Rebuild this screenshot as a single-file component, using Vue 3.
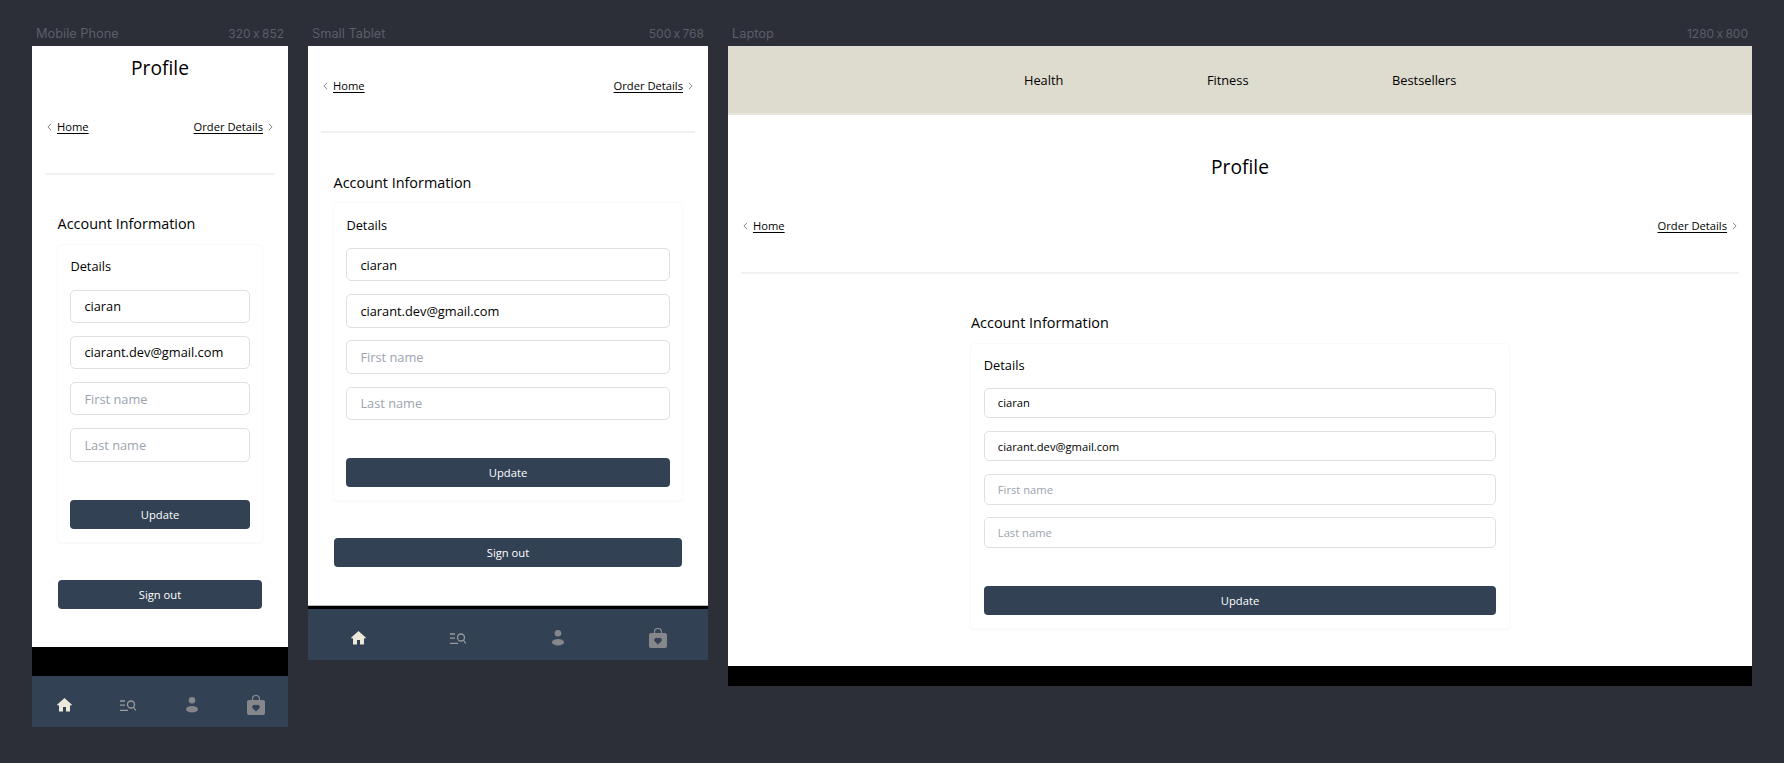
<template>
  <div class="canvas">
    <section class="device mobile">
      <div class="device-label"><span>Mobile Phone</span><span class="size">320 x 852</span></div>
      <div class="screen">
        <div class="page">
          <h1 class="title">Profile</h1>
          <div class="crumbs">
            <a class="crumb"><svg class="chev" viewBox="0 0 6 10"><path d="M5 1 1 5l4 4" /></svg><u>Home</u></a>
            <a class="crumb"><u>Order Details</u><svg class="chev" viewBox="0 0 6 10"><path d="m1 1 4 4-4 4" /></svg></a>
          </div>
          <hr class="rule" />
          <div class="content">
            <h2 class="heading">Account Information</h2>
            <form class="card" @submit.prevent>
              <h3 class="card-title">Details</h3>
              <input v-for="f in fields" :key="f.ph" class="field" :value="f.val" :placeholder="f.ph" />
              <button class="btn update">Update</button>
            </form>
            <button class="btn signout">Sign out</button>
          </div>
        </div>
        <div class="gap"></div>
        <nav class="tabbar">
          <svg class="home" viewBox="0 0 15 13.4"><path class="on" d="M7.5 0 0 6.800l1 1 1-.8v6.400h4V9h3v4.400h4V7l1 .8 1-1z" /></svg>
          <svg class="search" viewBox="0 0 16 11"><path class="line" d="M0 1h5M0 5.200h5M0 10.300h8M13.400 7l2.300 3.500" /><circle class="line" cx="11" cy="4.500" r="3.500" /></svg>
          <svg class="user" viewBox="0 0 12 15.400"><circle class="off" cx="6" cy="3.300" r="3.300" /><ellipse class="off" cx="6" cy="12.200" rx="6" ry="3.200" /></svg>
          <svg class="bag" viewBox="0 0 18 20"><path class="handle" d="M5.500 6V3.800a3.500 3.300 0 0 1 7 0V6" /><rect class="off" y="5" width="18" height="15" rx="2" /><path class="heart" d="M9 16.500 5.400 13a2.300 2.300 0 0 1 3.600-2.700 2.300 2.300 0 0 1 3.600 2.700z" /></svg>
        </nav>
      </div>
    </section>

    <section class="device tablet">
      <div class="device-label"><span>Small Tablet</span><span class="size">500 x 768</span></div>
      <div class="screen">
        <div class="page">
          <div class="crumbs">
            <a class="crumb"><svg class="chev" viewBox="0 0 6 10"><path d="M5 1 1 5l4 4" /></svg><u>Home</u></a>
            <a class="crumb"><u>Order Details</u><svg class="chev" viewBox="0 0 6 10"><path d="m1 1 4 4-4 4" /></svg></a>
          </div>
          <hr class="rule" />
          <div class="content">
            <h2 class="heading">Account Information</h2>
            <form class="card" @submit.prevent>
              <h3 class="card-title">Details</h3>
              <input v-for="f in fields" :key="f.ph" class="field" :value="f.val" :placeholder="f.ph" />
              <button class="btn update">Update</button>
            </form>
            <button class="btn signout">Sign out</button>
          </div>
        </div>
        <div class="gap"></div>
        <nav class="tabbar">
          <svg class="home" viewBox="0 0 15 13.4"><path class="on" d="M7.5 0 0 6.800l1 1 1-.8v6.400h4V9h3v4.400h4V7l1 .8 1-1z" /></svg>
          <svg class="search" viewBox="0 0 16 11"><path class="line" d="M0 1h5M0 5.200h5M0 10.300h8M13.400 7l2.300 3.500" /><circle class="line" cx="11" cy="4.500" r="3.500" /></svg>
          <svg class="user" viewBox="0 0 12 15.400"><circle class="off" cx="6" cy="3.300" r="3.300" /><ellipse class="off" cx="6" cy="12.200" rx="6" ry="3.200" /></svg>
          <svg class="bag" viewBox="0 0 18 20"><path class="handle" d="M5.500 6V3.800a3.500 3.300 0 0 1 7 0V6" /><rect class="off" y="5" width="18" height="15" rx="2" /><path class="heart" d="M9 16.500 5.400 13a2.300 2.300 0 0 1 3.600-2.700 2.300 2.300 0 0 1 3.600 2.700z" /></svg>
        </nav>
      </div>
    </section>

    <section class="device laptop">
      <div class="device-label"><span>Laptop</span><span class="size">1280 x 800</span></div>
      <div class="screen">
        <header class="topnav">
          <a>Health</a>
          <a>Fitness</a>
          <a>Bestsellers</a>
        </header>
        <div class="page">
          <h1 class="title">Profile</h1>
          <div class="crumbs">
            <a class="crumb"><svg class="chev" viewBox="0 0 6 10"><path d="M5 1 1 5l4 4" /></svg><u>Home</u></a>
            <a class="crumb"><u>Order Details</u><svg class="chev" viewBox="0 0 6 10"><path d="m1 1 4 4-4 4" /></svg></a>
          </div>
          <hr class="rule" />
          <div class="content">
            <h2 class="heading">Account Information</h2>
            <form class="card" @submit.prevent>
              <h3 class="card-title">Details</h3>
              <input v-for="f in fields" :key="f.ph" class="field" :value="f.val" :placeholder="f.ph" />
              <button class="btn update">Update</button>
            </form>
          </div>
        </div>
        <div class="gap"></div>
      </div>
    </section>
  </div>
</template>

<script setup>
const fields = [
  { val: 'ciaran', ph: 'Username' },
  { val: 'ciarant.dev@gmail.com', ph: 'Email' },
  { val: '', ph: 'First name' },
  { val: '', ph: 'Last name' }
]
</script>

<style>
html, body {
  margin: 0;
  background: #2c2e38;
}
</style>

<style scoped>
.canvas {
  display: flex;
  align-items: flex-start;
  gap: 20px;
  padding: 0 32px;
  height: 763px;
  box-sizing: border-box;
  overflow: hidden;
  font-family: "Open Sans", "Liberation Sans", sans-serif;
  color: #000;
}

.device { flex: none; }
.mobile { width: 256px; }
.tablet { width: 400px; }
.laptop { width: 1024px; }

.device-label {
  display: flex;
  justify-content: space-between;
  align-items: flex-end;
  height: 46px;
  padding: 0 4px 4px;
  box-sizing: border-box;
  font-family: Inter, sans-serif;
  font-size: 12.8px;
  line-height: 16px;
  color: #5b5e67;
}
.size {
  font-size: 12px;
  word-spacing: -1px;
  font-feature-settings: "calt" 0; /* keep the plain x between the numbers */
}

.screen { display: flex; flex-direction: column; }

.page { background: #fff; }
.mobile .page { height: 601px; }
.tablet .page { height: 559px; border-bottom: 1px solid #bbb; }
.laptop .page { height: 551px; }

.gap { background: #000; }
.mobile .gap { height: 29px; }
.tablet .gap { height: 3px; }
.laptop .gap { height: 20px; }

.title {
  margin: 0;
  font-size: 19.2px;
  font-weight: 400;
  line-height: 26px;
  text-align: center;
}
.mobile .title { padding-top: 9px; }
.laptop .title { padding-top: 39px; }

.crumbs {
  display: flex;
  justify-content: space-between;
  padding: 38px 15px 0;
  font-size: 11.2px;
  line-height: 16px;
}
.tablet .crumbs { padding-top: 31.5px; }

.crumb { display: flex; align-items: center; gap: 5px; color: #000; }
.crumb u { text-underline-offset: 2px; }
.chev {
  width: 5px;
  height: 8px;
  fill: none;
  stroke: #666;
  stroke-width: 1;
}

.rule {
  margin: 37.5px 13px 0;
  border: 0;
  height: 2px;
  background: #f1f1f1;
}

.content { padding: 39.5px 25.6px 0; }
.laptop .content {
  width: 538px;
  margin: 0 auto;
  padding: 39.5px 0 0;
}

.heading {
  margin: 0 0 10.6px;
  font-size: 14.4px;
  font-weight: 400;
  line-height: 20px;
}

.card {
  display: flex;
  flex-direction: column;
  padding: 12.8px;
  background: #fff;
  border-radius: 3px;
  box-shadow: 0 0 0 1px #fafafa, 0 1px 3px rgba(0, 0, 0, 0.08);
}

.card-title {
  margin: 0 0 13px;
  font-size: 12.8px;
  font-weight: 400;
  line-height: 19.2px;
}

.field {
  height: 33.4px;
  margin-bottom: 12.8px;
  padding: 0 13px;
  box-sizing: border-box;
  border: 1px solid #dfe0e6;
  border-radius: 5px;
  font-family: inherit;
  font-size: 12.8px;
  color: #000;
  outline: none;
}
.field::placeholder { color: #9ca3af; }
.laptop .card-title { margin-bottom: 12px; }
.laptop .field {
  height: 30.5px;
  font-size: 11.2px;
}

.btn {
  height: 28.8px;
  border: 0;
  border-radius: 4px;
  background: #334155;
  color: #fff;
  font-family: inherit;
  font-size: 11.2px;
}
.update { margin-top: 25.6px; }
.signout { width: 100%; margin-top: 38.4px; }

.tabbar {
  display: grid;
  grid-template-columns: repeat(4, 1fr);
  align-items: center;
  justify-items: center;
  height: 51px;
  padding-top: 7px;
  box-sizing: border-box;
  background: #334155;
}
.home { width: 15px; height: 13.4px; }
.search { width: 16px; height: 11px; overflow: visible; }
.user { width: 12px; height: 15.4px; }
.bag { width: 18px; height: 20px; }
.on { fill: #ece8da; }
.off { fill: #85878b; }
.line { fill: none; stroke: #9a9b9b; stroke-width: 1.3; }
.handle { fill: none; stroke: #8c8c8c; stroke-width: 1.2; }
.heart { fill: #334155; }

.topnav {
  display: flex;
  align-items: center;
  gap: 143.5px;
  height: 69px;
  padding-left: 296px;
  box-sizing: border-box;
  background: #dedbcf;
  border-bottom: 2px solid #e8e5db;
  font-size: 12.8px;
}
</style>
